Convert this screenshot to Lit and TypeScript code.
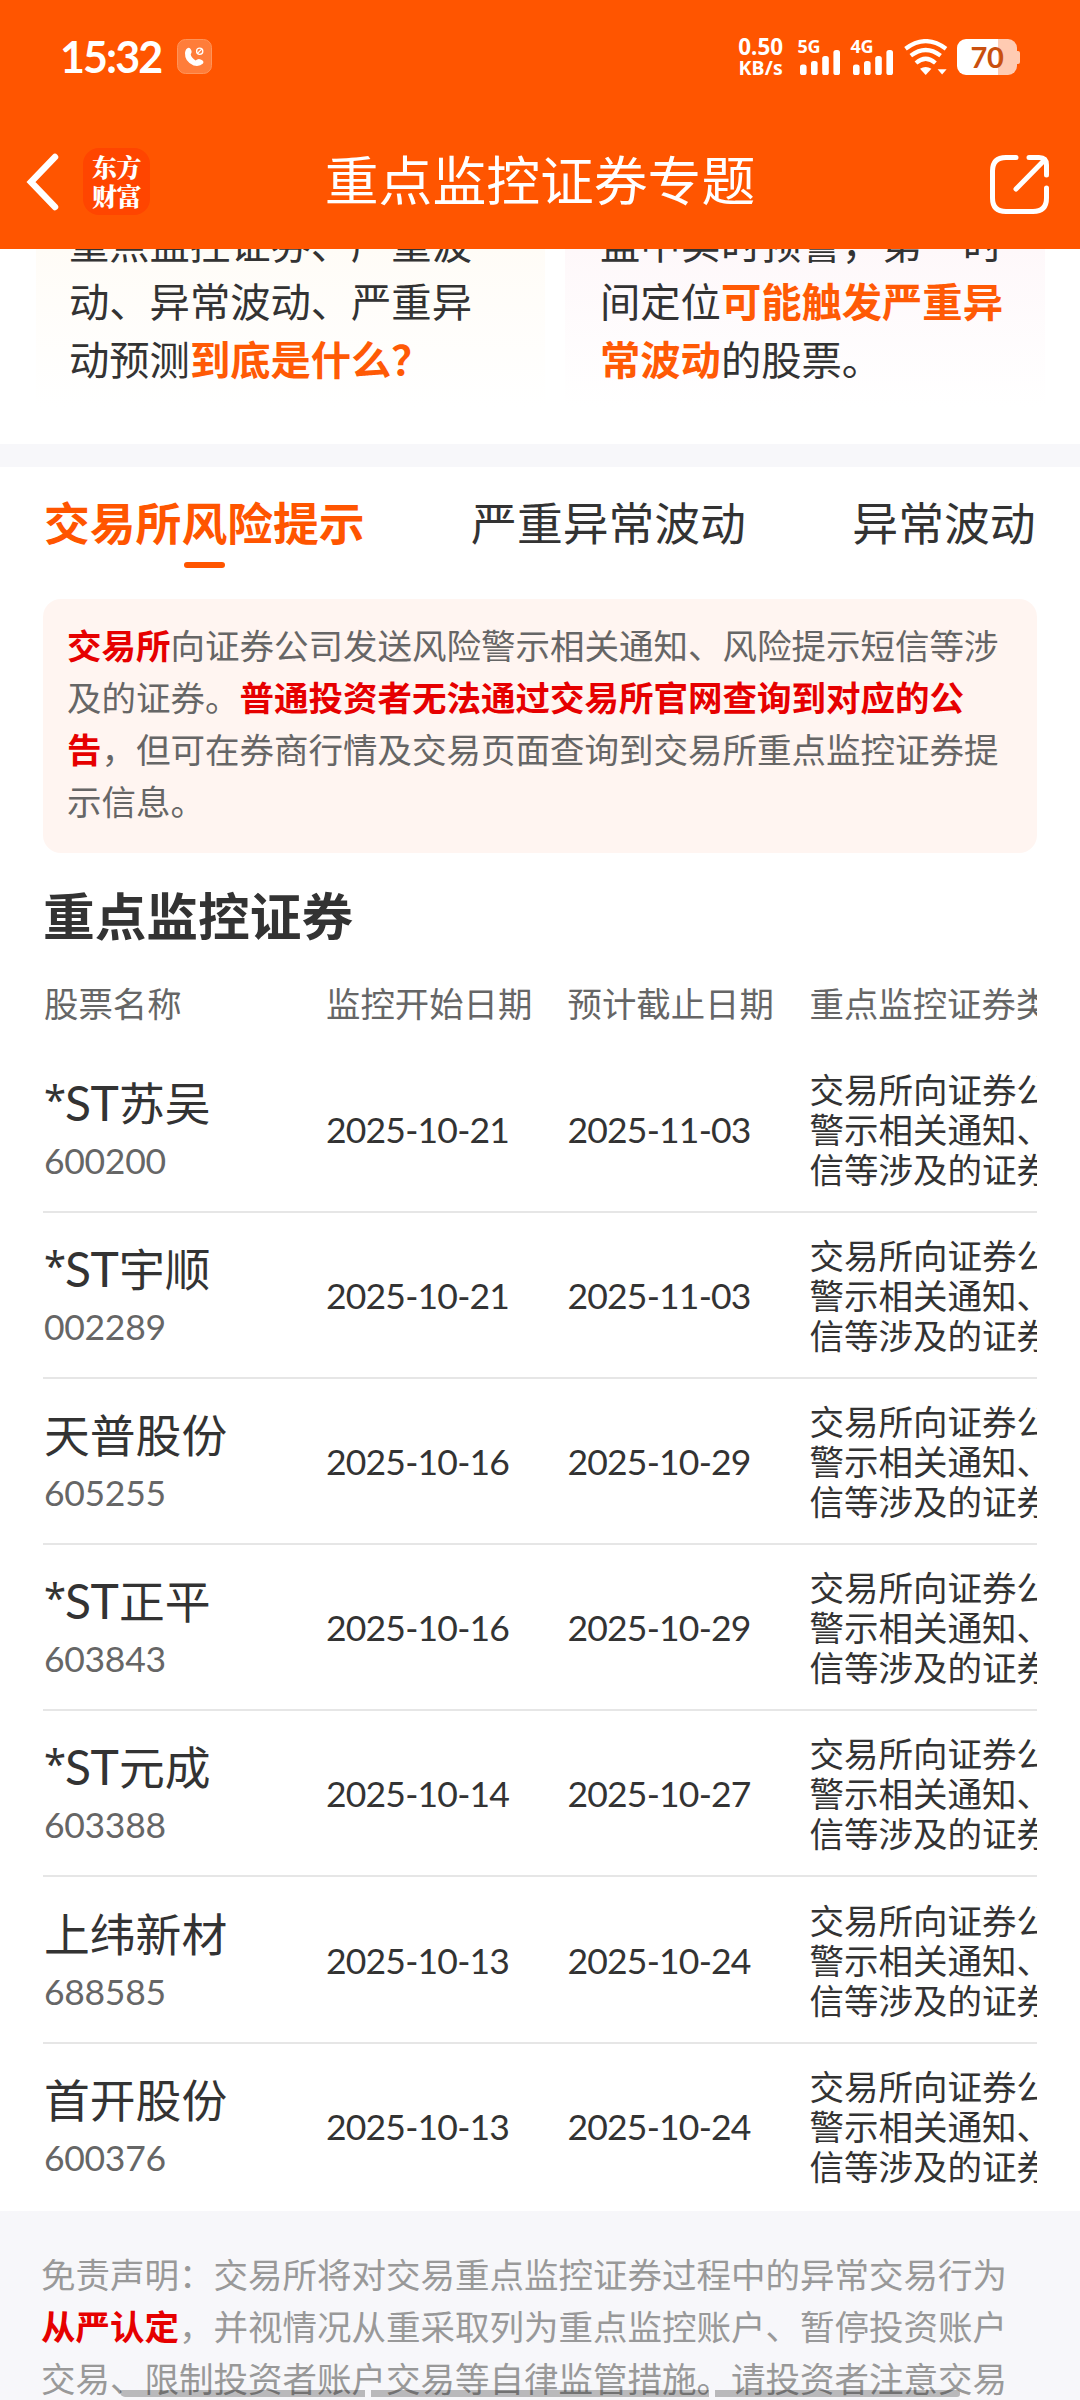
import { LitElement, html, css, svg } from "lit";
import { customElement, property } from "lit/decorators.js";

interface Stock {
  special: boolean;
  name: string;
  code: string;
  start: string;
  end: string;
}

const STOCKS: Stock[] = [
  { special: true, name: "苏吴", code: "600200", start: "2025-10-21", end: "2025-11-03" },
  { special: true, name: "宇顺", code: "002289", start: "2025-10-21", end: "2025-11-03" },
  { special: false, name: "天普股份", code: "605255", start: "2025-10-16", end: "2025-10-29" },
  { special: true, name: "正平", code: "603843", start: "2025-10-16", end: "2025-10-29" },
  { special: true, name: "元成", code: "603388", start: "2025-10-14", end: "2025-10-27" },
  { special: false, name: "上纬新材", code: "688585", start: "2025-10-13", end: "2025-10-24" },
  { special: false, name: "首开股份", code: "600376", start: "2025-10-13", end: "2025-10-24" },
];

const signalBars = svg`
  <rect x="0" y="14.5" width="6.6" height="10.5" rx="2.6"/>
  <rect x="11" y="11" width="6.6" height="14" rx="2.6"/>
  <rect x="22.2" y="6" width="6.6" height="19" rx="2.6"/>
  <rect x="33.4" y="0" width="6.6" height="25" rx="2.6"/>`;

@customElement("status-bar")
export class StatusBar extends LitElement {
  static styles = css`
    :host { display: flex; align-items: flex-start; height: 112px; padding: 0 60px 0 60px; color: #fff; font-family: "Noto Sans", "Liberation Sans", sans-serif; }
    .time { width: 117px; height: 40px; margin-top: 37px; font: 700 43px/40px Lato, sans-serif; letter-spacing: -1.9px; }
    .call { display: block; margin-top: 39px; }
    .spacer { flex: 1; }
    .speed { width: 52px; margin-top: 36px; text-align: right; font-weight: 700; }
    .rate { font-size: 22.4px; line-height: 22px; }
    .unit { font-size: 19.5px; line-height: 19px; letter-spacing: 0.2px; }
    .signal { width: 42px; margin-left: 14.5px; margin-top: 38px; }
    .signal.second { margin-left: 11px; }
    .signal svg { display: block; margin: -4px 0 0 2px; }
    .gen { font-size: 18px; line-height: 16px; height: 16px; font-weight: 700; letter-spacing: -0.2px; }
    .wifi { display: block; margin: 39px 0 0 11.5px; }
    .battery { display: flex; align-items: center; margin: 39px 0 0 9px; }
    .cell { width: 60px; height: 36px; border-radius: 9px; background: linear-gradient(90deg, #fff 0 41px, #ffcbb2 41px); color: #c9500f; font: 700 29px/36px Lato, sans-serif; text-align: center; letter-spacing: -0.3px; }
    .nub { width: 3px; height: 13px; border-radius: 0 2px 2px 0; background: #ffcbb2; }
  `;
  render() {
    return html`
      <div class="time">15:32</div>
      <svg class="call" width="35" height="35" viewBox="0 0 35 35">
        <rect x=".5" y=".5" width="34" height="34" rx="8" fill="#ff7d3a" stroke="#ff9459"/>
        <path d="M9.2 10.2 Q11.5 7.2 13.6 10 Q15.6 13 13.7 15.3 Q14.2 18.6 18.6 21.6 Q20.8 19.4 23.6 20.4 Q27.6 21.8 26 24.4 Q22.5 28 16.6 26.4 Q7.6 22.8 8 14 Q8.2 11.6 9.2 10.2Z" fill="#fff"/>
        <circle cx="22.7" cy="12.2" r="3.1" fill="none" stroke="#fff" stroke-width="1.3"/>
        <path d="M20.7 14.2 L24.7 10.2" stroke="#fff" stroke-width="1.2"/>
      </svg>
      <div class="spacer"></div>
      <div class="speed"><div class="rate">0.50</div><div class="unit">KB/s</div></div>
      <div class="signal"><div class="gen">5G</div><svg width="40" height="25" fill="#fff">${signalBars}</svg></div>
      <div class="signal second"><div class="gen">4G</div><svg width="40" height="25" fill="#fff">${signalBars}</svg></div>
      <svg class="wifi" width="44" height="36" viewBox="0 0 44 36" fill="none" stroke="#fff" stroke-width="4.2">
        <path d="M1.5 9.7 Q21.7 -5.5 42 9.7"/>
        <path d="M6.8 16.6 Q21.7 5.4 36.6 16.6"/>
        <path d="M12 24 Q21.7 15.6 31.4 24"/>
        <path d="M16 29.8 Q21.7 26 27.4 29.8 L21.7 36Z" fill="#fff" stroke="none"/>
        <path d="M33.6 30.2 H42.6 L38.1 35.4Z" fill="#fff" stroke="none"/>
      </svg>
      <div class="battery"><div class="cell">70</div><div class="nub"></div></div>
    `;
  }
}

@customElement("title-bar")
export class TitleBar extends LitElement {
  static styles = css`
    :host { display: grid; grid-template-columns: 200px 1fr 200px; align-items: center; height: 137px; color: #fff; }
    .left { display: flex; align-items: center; padding: 2px 0 0 24px; }
    .left svg { display: block; }
    .logo { display: grid; grid-template-columns: 24.5px 24.5px; justify-content: center; align-content: center; width: 67px; height: 67px; margin-left: 20px; border-radius: 16px; background: #ff4500; font: 900 25px/29px "Noto Serif CJK SC", "Noto Sans CJK SC", sans-serif; padding-bottom: 1px; box-sizing: border-box; }
    .title { text-align: center; font-size: 53.8px; line-height: 60px; margin-top: -6px; }
    .share { justify-self: end; display: block; margin: 7px 30px 0 0; }
  `;
  render() {
    return html`
      <div class="left">
        <svg width="39" height="60" viewBox="0 0 39 60"><path d="M31 5 L7 30 L31 55" fill="none" stroke="#fff" stroke-width="6.5" stroke-linecap="round"/></svg>
        <div class="logo"><span>东</span><span>方</span><span>财</span><span>富</span></div>
      </div>
      <div class="title">重点监控证券专题</div>
      <svg class="share" width="61" height="61" viewBox="0 0 61 61" fill="none" stroke="#fff" stroke-width="5" stroke-linecap="round" stroke-linejoin="round">
        <path d="M27 3.5 H17 Q3.5 3.5 3.5 17 V44 Q3.5 57.5 17 57.5 H44 Q57.5 57.5 57.5 44 V34"/>
        <path d="M40 3.5 H50 Q57.5 3.5 57.5 11 V21"/>
        <path d="M27 35 L55.5 6"/>
      </svg>
    `;
  }
}

@customElement("stock-row")
export class StockRow extends LitElement {
  @property({ attribute: false }) stock!: Stock;
  static styles = css`
    :host { display: grid; grid-template-columns: 283px 241.5px 242px 344px; align-items: center; box-sizing: border-box; height: 166.1px; border-bottom: 2px solid #e6e6e6; color: #333; white-space: nowrap; }
    :host([last]) { border-bottom-color: transparent; }
    .issuer { padding: 0 0 2px 1px; }
    .name { display: flex; align-items: baseline; font-size: 45.8px; line-height: 58px; height: 58px; }
    .star { align-self: flex-start; width: 21px; font-family: "Noto Sans", sans-serif; font-size: 40px; line-height: 54px; }
    .latin { width: 54px; font-family: Lato, sans-serif; font-size: 48px; letter-spacing: -0.6px; }
    .code { font: 400 35.5px/46px Lato, sans-serif; color: #666; letter-spacing: -0.3px; margin-top: 8px; }
    .date { font: 400 35.5px/46px Lato, sans-serif; letter-spacing: -0.8px; padding-top: 2px; }
    .kind { font-size: 34.5px; line-height: 40px; padding-bottom: 2px; }
  `;
  render() {
    const s = this.stock;
    return html`
      <div class="issuer">
        <div class="name">${s.special ? html`<span class="star">*</span><span class="latin">ST</span>` : ""}<span>${s.name}</span></div>
        <div class="code">${s.code}</div>
      </div>
      <div class="date">${s.start}</div>
      <div class="date">${s.end}</div>
      <div class="kind">交易所向证券公司发送风险<br>警示相关通知、风险提示短<br>信等涉及的证券</div>
    `;
  }
}

@customElement("app-root")
export class AppRoot extends LitElement {
  static styles = css`
    :host { display: flex; flex-direction: column; position: relative; width: 1080px; height: 2400px; overflow: hidden; background: #fff; color: #333; font-family: "Noto Sans CJK SC", sans-serif; white-space: nowrap; }
    b { font-weight: 700; }
    .head { flex: none; height: 249px; background: #ff5500; }
    .cards { flex: none; display: flex; gap: 20px; height: 195px; padding: 0 35px 0 36px; box-sizing: border-box; overflow: hidden; align-items: flex-start; }
    .card { box-sizing: border-box; height: 158px; overflow: hidden; display: flex; align-items: flex-end; padding: 0 0 20px 33px; font-size: 40.3px; line-height: 58px; }
    .card.basics { width: 509px; background: linear-gradient(#fffcf7, #fff); }
    .card.alerts { width: 480px; padding-left: 35px; background: linear-gradient(#fef8fa, #fff); }
    .card b { color: #ff5a05; }
    .strip { flex: none; height: 23px; background: #f7f7fa; }
    .tabs { flex: none; display: flex; gap: 106.5px; height: 132px; padding-left: 44px; font-size: 45.8px; }
    .tab { display: flex; flex-direction: column; align-items: center; padding-top: 24px; line-height: 60px; }
    .tab.active { color: #ff5500; font-weight: 700; }
    .tab.active::after { content: ""; width: 41px; height: 6px; margin-top: 11px; border-radius: 3px; background: #ff5500; }
    .notice { flex: none; box-sizing: border-box; width: 994px; height: 254px; margin-left: 43px; padding: 19px 0 0 24px; border-radius: 18px; background: #fff5f1; color: #666; font-size: 34.5px; line-height: 52.1px; }
    .notice b, .disclaimer b { color: #e60000; }
    .heading { flex: none; height: 70px; margin: 26px 0 0 43px; font-size: 51.7px; line-height: 70px; font-weight: 700; }
    .table { flex: none; width: 994px; margin-left: 43px; overflow: hidden; }
    .columns { display: grid; grid-template-columns: 283px 241.5px 242px 344px; height: 98px; padding-top: 28px; box-sizing: border-box; font-size: 34.4px; line-height: 50px; color: #666; }
    .columns > span:first-child { padding-left: 1px; }
    .disclaimer { flex: none; height: 189px; margin-top: 1.3px; box-sizing: border-box; padding: 36px 0 0 41px; background: #f7f7fa; color: #999; font-size: 34.5px; line-height: 52px; }
    .scroll { position: absolute; left: 120px; top: 2390px; display: flex; gap: 6px; }
    .scroll span { height: 7px; width: 338px; background: rgba(0, 0, 0, 0.25); }
    .scroll span:first-child { width: 245px; border-bottom-left-radius: 5px; }
    .scroll span:last-child { width: 245px; border-radius: 0 3px 3px 0; }
  `;
  render() {
    return html`
      <div class="head"><status-bar></status-bar><title-bar></title-bar></div>
      <div class="cards">
        <div class="card basics"><div>重点监控证券、严重波<br>动、异常波动、严重异<br>动预测<b>到底是什么？</b></div></div>
        <div class="card alerts"><div>盘中实时预警，第一时<br>间定位<b>可能触发严重异</b><br><b>常波动</b>的股票。</div></div>
      </div>
      <div class="strip"></div>
      <div class="tabs">
        <div class="tab active">交易所风险提示</div>
        <div class="tab">严重异常波动</div>
        <div class="tab">异常波动</div>
      </div>
      <div class="notice"><b>交易所</b>向证券公司发送风险警示相关通知、风险提示短信等涉<br>及的证券。<b>普通投资者无法通过交易所官网查询到对应的公<br>告</b>，但可在券商行情及交易页面查询到交易所重点监控证券提<br>示信息。</div>
      <div class="heading">重点监控证券</div>
      <div class="table">
        <div class="columns"><span>股票名称</span><span>监控开始日期</span><span>预计截止日期</span><span>重点监控证券类型</span></div>
        ${STOCKS.map((s, i) => html`<stock-row .stock=${s} ?last=${i === STOCKS.length - 1}></stock-row>`)}
      </div>
      <div class="disclaimer">免责声明：交易所将对交易重点监控证券过程中的异常交易行为<br><b>从严认定</b>，并视情况从重采取列为重点监控账户、暂停投资账户<br>交易、限制投资者账户交易等自律监管措施。请投资者注意交易</div>
      <div class="scroll"><span></span><span></span><span></span></div>
    `;
  }
}
